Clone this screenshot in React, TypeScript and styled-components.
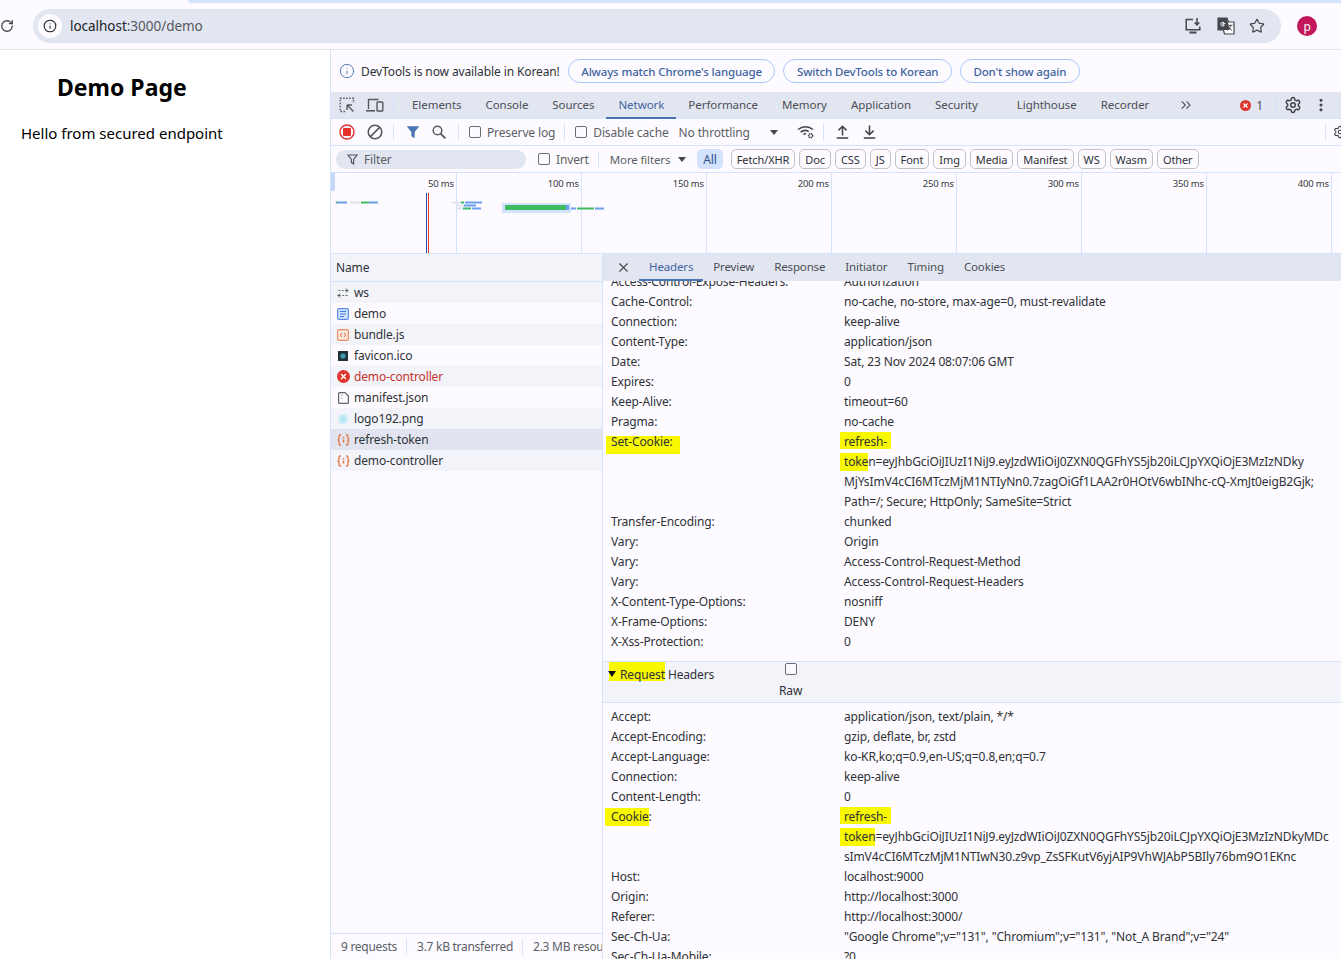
import styled, { createGlobalStyle } from 'styled-components';
import { ChevronsRight, Info, MoreVertical, RotateCw, Settings, Star, X } from 'lucide-react';

const colors = {
  bg: '#fdfbff',
  band: '#e2e6f1',
  line: '#d3e3fd',
  alt: '#f2f4fa',
  text: '#4c4f55',
  dark: '#2f3237',
  dim: '#5c5f66',
  blue: '#3f639f',
  mark: '#f8f800',
};

const GlobalStyle = createGlobalStyle`
  html, body {
    margin: 0;
    padding: 0;
    height: 100%;
    overflow: hidden;
    background: ${colors.bg};
  }
  #root {
    height: 100%;
  }
  * {
    box-sizing: border-box;
  }
`;

const mainTabs = ['Console', 'Sources', 'Network', 'Performance', 'Memory', 'Application', 'Security', 'Lighthouse', 'Recorder'];
const chips = ['Fetch/XHR', 'Doc', 'CSS', 'JS', 'Font', 'Img', 'Media', 'Manifest', 'WS', 'Wasm', 'Other'];
const ticks = [50, 100, 150, 200, 250, 300, 350, 400];
const detailTabs = ['Preview', 'Response', 'Initiator', 'Timing', 'Cookies'];

type IconKind = 'ws' | 'doc' | 'script' | 'favicon' | 'error' | 'manifest' | 'image' | 'fetch';
const requests: { name: string; icon: IconKind; failed?: boolean; selected?: boolean }[] = [
  { name: 'ws', icon: 'ws' },
  { name: 'demo', icon: 'doc' },
  { name: 'bundle.js', icon: 'script' },
  { name: 'favicon.ico', icon: 'favicon' },
  { name: 'demo-controller', icon: 'error', failed: true },
  { name: 'manifest.json', icon: 'manifest' },
  { name: 'logo192.png', icon: 'image' },
  { name: 'refresh-token', icon: 'fetch', selected: true },
  { name: 'demo-controller', icon: 'fetch' },
];

const responseTop = [
  ['Access-Control-Expose-Headers:', 'Authorization'],
  ['Cache-Control:', 'no-cache, no-store, max-age=0, must-revalidate'],
  ['Connection:', 'keep-alive'],
  ['Content-Type:', 'application/json'],
  ['Date:', 'Sat, 23 Nov 2024 08:07:06 GMT'],
  ['Expires:', '0'],
  ['Keep-Alive:', 'timeout=60'],
  ['Pragma:', 'no-cache'],
];

const responseBottom = [
  ['Transfer-Encoding:', 'chunked'],
  ['Vary:', 'Origin'],
  ['Vary:', 'Access-Control-Request-Method'],
  ['Vary:', 'Access-Control-Request-Headers'],
  ['X-Content-Type-Options:', 'nosniff'],
  ['X-Frame-Options:', 'DENY'],
  ['X-Xss-Protection:', '0'],
];

const requestTop = [
  ['Accept:', 'application/json, text/plain, */*'],
  ['Accept-Encoding:', 'gzip, deflate, br, zstd'],
  ['Accept-Language:', 'ko-KR,ko;q=0.9,en-US;q=0.8,en;q=0.7'],
  ['Connection:', 'keep-alive'],
  ['Content-Length:', '0'],
];

const requestBottom = [
  ['Host:', 'localhost:9000'],
  ['Origin:', 'http://localhost:3000'],
  ['Referer:', 'http://localhost:3000/'],
  ['Sec-Ch-Ua:', '"Google Chrome";v="131", "Chromium";v="131", "Not_A Brand";v="24"'],
  ['Sec-Ch-Ua-Mobile:', '?0'],
];

const InstallIcon = () => (
  <svg width="18" height="18" viewBox="0 0 18 18" fill="none" stroke="#45474c" strokeWidth="1.5">
    <path d="M9 2.5H2.2v10.3h13.6V9.5" />
    <path d="M5.5 15.5h7" strokeWidth="2" />
    <path d="M13 1v6.5M10.7 5.4 13 7.8l2.3-2.4" />
  </svg>
);

const TranslateIcon = () => (
  <svg width="18" height="18" viewBox="0 0 18 18">
    <path d="M1 1h9l1.5 4H17v12H7.5L6.5 13H1z" fill="#fdfbff" stroke="#45474c" strokeWidth="1.2" />
    <path d="M1 1h9l2.6 12H1z" fill="#45474c" />
    <path d="M8.4 6.6H5.9v1.3h1.3c-.2.8-.8 1.2-1.5 1.2a1.9 1.9 0 1 1 1.2-3.4" fill="none" stroke="#fdfbff" strokeWidth="1" />
    <path d="M11.5 8.3h4M13.5 8.3c-.2 2.4-1.2 4-3 5M12 10.4c.6 1.2 1.6 2.2 3 3" fill="none" stroke="#45474c" strokeWidth="1" />
  </svg>
);

const InspectIcon = () => (
  <svg width="16" height="16" viewBox="0 0 16 16" fill="none" stroke="#55585e" strokeWidth="1.4">
    <path d="M6 14.5H1.2V1.2h13.3V6" strokeDasharray="1.6 1.4" />
    <path d="M8 8h5M8 8v5M8 8l6.5 6.5" />
  </svg>
);

const DeviceIcon = () => (
  <svg width="18" height="15" viewBox="0 0 18 15" fill="none" stroke="#55585e" strokeWidth="1.4">
    <path d="M2.5 11V1.5h10" />
    <path d="M0 12.8h9" strokeWidth="1.6" />
    <rect x="11" y="4" width="5.8" height="9" rx="0.8" />
  </svg>
);

const RecordIcon = () => (
  <svg width="16" height="16" viewBox="0 0 16 16">
    <circle cx="8" cy="8" r="7" fill="none" stroke="#e5322d" strokeWidth="1.4" />
    <rect x="4" y="4" width="8" height="8" rx="1" fill="#e5322d" />
  </svg>
);

const ClearIcon = () => (
  <svg width="16" height="16" viewBox="0 0 16 16" fill="none" stroke="#55585e" strokeWidth="1.6">
    <circle cx="8" cy="8" r="6.8" />
    <path d="M3.4 12.6 12.6 3.4" />
  </svg>
);

const SearchIcon = () => (
  <svg width="14" height="14" viewBox="0 0 14 14" fill="none" stroke="#55585e" strokeWidth="1.5">
    <circle cx="5.5" cy="5.5" r="4.3" />
    <path d="M8.6 8.6 13.4 13.4" strokeWidth="1.9" />
  </svg>
);

const UploadIcon = () => (
  <svg width="13" height="14" viewBox="0 0 13 14" fill="none" stroke="#45474c" strokeWidth="1.6">
    <path d="M6.5 10.5V1.5M2.4 5.4 6.5 1.3l4.1 4.1" />
    <path d="M.8 13h11.4" />
  </svg>
);

const DownloadIcon = () => (
  <svg width="13" height="14" viewBox="0 0 13 14" fill="none" stroke="#45474c" strokeWidth="1.6">
    <path d="M6.5 .5v9M2.4 5.6l4.1 4.1 4.1-4.1" />
    <path d="M.8 13h11.4" />
  </svg>
);

const FunnelIcon = ({ size, color }: { size: number; color: string }) => (
  <svg width={size} height={size} viewBox="0 0 12 12">
    <path d="M.6 1h10.8L7.4 6v5.4L4.6 9.6V6z" fill={color} />
  </svg>
);

const OutlineFunnel = () => (
  <svg width="11" height="11" viewBox="0 0 11 11" fill="none" stroke="#54575d" strokeWidth="1.2">
    <path d="M1 1h9L6.6 5.4V10L4.4 8.6V5.4z" />
  </svg>
);

const WifiGearIcon = () => (
  <svg width="18" height="14" viewBox="0 0 18 14" fill="none" stroke="#45474c" strokeWidth="1.5">
    <path d="M1 4.5C5.5.8 11.5.8 16 4.5" />
    <path d="M3.6 7.2c2.5-2 5.8-2.2 8.2-.6" />
    <path d="M6.3 9.5c.9-.7 1.8-.9 2.8-.7" />
    <circle cx="13.6" cy="10.6" r="2" strokeWidth="1.6" strokeDasharray="1.2 .5" />
  </svg>
);

const ErrorBadge = ({ size }: { size: number }) => (
  <svg width={size} height={size} viewBox="0 0 12 12">
    <circle cx="6" cy="6" r="6" fill="#dc362e" />
    <path d="M3.8 3.8l4.4 4.4M8.2 3.8 3.8 8.2" stroke="#fff" strokeWidth="1.3" />
  </svg>
);

const RequestIcon = ({ kind }: { kind: IconKind }) => {
  switch (kind) {
    case 'ws':
      return (
        <svg width="12" height="12" viewBox="0 0 12 12" fill="none" stroke="#55585e" strokeWidth="1">
          <path d="M1.5 3.5h2M5 3.5h1.5M8 3.5h3M9 1.5l2 2-2 2" />
          <path d="M.8 8.5h3M5.5 8.5H7M8.5 8.5h2M3 6.5l-2 2 2 2" />
        </svg>
      );
    case 'doc':
      return (
        <svg width="12" height="12" viewBox="0 0 12 12">
          <rect x=".6" y=".6" width="10.8" height="10.8" rx="1.5" fill="#d3e3fd" stroke="#5a8eea" strokeWidth="1.2" />
          <path d="M3 3.5h6M3 6h6M3 8.5h4" stroke="#3b78e7" strokeWidth="1" />
        </svg>
      );
    case 'script':
      return (
        <svg width="12" height="12" viewBox="0 0 12 12">
          <rect x=".6" y=".6" width="10.8" height="10.8" rx="1.5" fill="#fbe9e0" stroke="#ea8c60" strokeWidth="1.2" />
          <path d="M5 4 3.4 6 5 8M7 4l1.6 2L7 8" fill="none" stroke="#e0662e" strokeWidth="1" />
        </svg>
      );
    case 'favicon':
      return (
        <svg width="10" height="10" viewBox="0 0 10 10">
          <rect width="10" height="10" fill="#23323a" />
          <circle cx="5" cy="5" r="2.6" fill="#3f9fb0" />
        </svg>
      );
    case 'error':
      return <ErrorBadge size={13} />;
    case 'manifest':
      return (
        <svg width="11" height="12" viewBox="0 0 11 12" fill="none" stroke="#5f6368" strokeWidth="1.2">
          <path d="M7 .6H1.6a1 1 0 0 0-1 1v8.8a1 1 0 0 0 1 1h7.8a1 1 0 0 0 1-1V4z" />
          <path d="M3.5 3.2h.8M3.5 6h.8" />
        </svg>
      );
    case 'image':
      return (
        <svg width="12" height="12" viewBox="0 0 12 12" fill="none" stroke="#a6e3f3" strokeWidth=".8">
          <ellipse cx="6" cy="6" rx="5" ry="2" />
          <ellipse cx="6" cy="6" rx="5" ry="2" transform="rotate(60 6 6)" />
          <ellipse cx="6" cy="6" rx="5" ry="2" transform="rotate(120 6 6)" />
          <circle cx="6" cy="6" r="1.1" fill="#a6e3f3" />
        </svg>
      );
    default:
      return (
        <svg width="13" height="12" viewBox="0 0 13 12" fill="none" stroke="#e57240" strokeWidth="1.3">
          <path d="M4 1H3C2 1 2 2 2 3v1.5C2 5.5 1 6 .6 6 1 6 2 6.5 2 7.5V9c0 1 0 2 1 2h1" />
          <path d="M9 1h1c1 0 1 1 1 2v1.5c0 1 1 1.5 1.4 1.5-.4 0-1.4.5-1.4 1.5V9c0 1 0 2-1 2H9" />
          <path d="M6.5 3v1.2M6.5 5.6v3" strokeWidth="1.5" />
        </svg>
      );
  }
};

const HeaderRows = ({ rows }: { rows: string[][] }) => (
  <>
    {rows.map(([key, value], index) => (
      <Row key={`${key}-${index}`}>
        <RowKey>{key}</RowKey>
        <RowValue>{value}</RowValue>
      </Row>
    ))}
  </>
);

export default function App() {
  return (
    <Page>
      <GlobalStyle />
      <BrowserBar>
        <TabEdge />
        <BrowserRow>
          <ReloadSlot>
            <RotateCw size={14} strokeWidth={2.2} color="#45474c" />
          </ReloadSlot>
          <Omnibox>
            <SiteInfo>
              <Info size={14} strokeWidth={1.8} color="#1f1f1f" />
            </SiteInfo>
            <UrlHost>localhost</UrlHost>
            <UrlPath>:3000/demo</UrlPath>
            <OmniboxActions>
              <InstallIcon />
              <TranslateIcon />
              <Star size={16} strokeWidth={1.8} color="#45474c" />
            </OmniboxActions>
          </Omnibox>
          <Avatar>p</Avatar>
        </BrowserRow>
      </BrowserBar>

      <Main>
        <DemoPane>
          <DemoTitle>Demo Page</DemoTitle>
          <DemoText>Hello from secured endpoint</DemoText>
        </DemoPane>

        <DevTools>
          <InfoBar>
            <Info size={16} strokeWidth={1.5} color="#5379b5" />
            <InfoText>DevTools is now available in Korean!</InfoText>
            <InfoButton>Always match Chrome's language</InfoButton>
            <InfoButton>Switch DevTools to Korean</InfoButton>
            <InfoButton>Don't show again</InfoButton>
          </InfoBar>

          <TabBar>
            <ToolIcon $width={28}>
              <InspectIcon />
            </ToolIcon>
            <ToolIcon $width={28}>
              <DeviceIcon />
            </ToolIcon>
            <VLine $margin="0 6px 0 4px" />
            <MainTab>Elements</MainTab>
            {mainTabs.map((tab) => (
              <MainTab key={tab} $active={tab === 'Network'} $extra={tab === 'Security' ? 15 : 0}>
                {tab}
              </MainTab>
            ))}
            <MoreTabs>
              <ChevronsRight size={16} strokeWidth={1.7} color="#55585e" />
            </MoreTabs>
            <TabBarRight>
              <ErrorBadge size={11} />
              <ErrorCount>1</ErrorCount>
              <VLine $margin="0 4px 0 8px" />
              <Settings size={18} strokeWidth={2} color="#3f4349" />
              <MenuSlot>
                <MoreVertical size={16} strokeWidth={2.6} color="#3f4349" />
              </MenuSlot>
            </TabBarRight>
          </TabBar>

          <ToolBar>
            <ToolIcon $width={28}>
              <RecordIcon />
            </ToolIcon>
            <ToolIcon $width={28}>
              <ClearIcon />
            </ToolIcon>
            <VLine $margin="0 12px 0 4px" />
            <FunnelIcon size={14} color="#4a74b4" />
            <ToolIcon $width={38}>
              <SearchIcon />
            </ToolIcon>
            <VLine $margin="0 10px 0 0" />
            <CheckLabel>
              <Check type="checkbox" readOnly />
              Preserve log
            </CheckLabel>
            <VLine $margin="0 10px 0 9px" />
            <CheckLabel>
              <Check type="checkbox" readOnly />
              Disable cache
            </CheckLabel>
            <Throttle>No throttling</Throttle>
            <Caret $gap={20} />
            <WifiSlot>
              <WifiGearIcon />
            </WifiSlot>
            <VLine $margin="0 10px 0 8px" />
            <ToolIcon $width={18}>
              <UploadIcon />
            </ToolIcon>
            <ToolIcon $width={36}>
              <DownloadIcon />
            </ToolIcon>
            <ToolBarEnd>
              <VLine $margin="0 7px 0 0" />
              <Settings size={14} strokeWidth={1.8} color="#3f4349" />
            </ToolBarEnd>
          </ToolBar>

          <FilterBar>
            <FilterInput>
              <OutlineFunnel />
              Filter
            </FilterInput>
            <CheckLabel>
              <Check type="checkbox" readOnly />
              Invert
            </CheckLabel>
            <VLine $margin="0 11px 0 9px" />
            <MoreFilters>More filters</MoreFilters>
            <Caret $gap={8} />
            <AllChip>All</AllChip>
            <ChipList>
              {chips.map((chip) => (
                <Chip key={chip}>{chip}</Chip>
              ))}
            </ChipList>
          </FilterBar>

          <Overview>
            {ticks.map((tick) => (
              <OverviewColumn key={tick}>{tick} ms</OverviewColumn>
            ))}
            <OverviewHandle />
            <OverviewBars width="300" height="80" viewBox="0 0 300 80">
              <g transform="translate(-331 -173)">
                <path d="M335 202.5h2" stroke="#dfe3ea" strokeWidth="2" />
                <path d="M336 202.5h1" stroke="#3fba62" strokeWidth="2" />
                <path d="M337 202.5h10M369 202.5h9" stroke="#6b9ff0" strokeWidth="2" />
                <path d="M350 202.5h10" stroke="#e0e3ea" strokeWidth="2" />
                <path d="M361 202.5h8" stroke="#3fba62" strokeWidth="2" />
                <path d="M452 202.5h9M456 205.5h8M457 208.5h6" stroke="#e0e3ea" strokeWidth="2" />
                <path d="M461 202.5h3M463 208.5h8" stroke="#3fba62" strokeWidth="2" />
                <path d="M465 202.5h17M464 205.5h12M472 208.5h9" stroke="#6b9ff0" strokeWidth="2" />
                <rect x="502" y="203" width="69" height="10" fill="#d3e3fd" />
                <rect x="505" y="205" width="61" height="5" fill="#3fba62" />
                <rect x="566" y="205" width="3" height="5" fill="#6b9ff0" />
                <path d="M571 208.5h5M595 208.5h9" stroke="#6b9ff0" strokeWidth="2" />
                <path d="M577 208.5h17" stroke="#3fba62" strokeWidth="2" />
                <path d="M426.5 193v60" stroke="#1f4fa8" strokeWidth="1" />
                <path d="M428.5 193v60" stroke="#e5322d" strokeWidth="1" />
              </g>
            </OverviewBars>
          </Overview>

          <Split>
            <RequestPane>
              <NameHeader>Name</NameHeader>
              <RequestList>
                {requests.map((request, index) => (
                  <RequestRow key={`${request.name}-${index}`} $odd={index % 2 === 0} $selected={request.selected}>
                    <RequestIconSlot>
                      <RequestIcon kind={request.icon} />
                    </RequestIconSlot>
                    <RequestName $failed={request.failed}>{request.name}</RequestName>
                  </RequestRow>
                ))}
              </RequestList>
              <StatusBar>
                <StatusItem>9 requests</StatusItem>
                <StatusItem>3.7 kB transferred</StatusItem>
                <StatusItem>2.3 MB resources</StatusItem>
              </StatusBar>
            </RequestPane>

            <DetailPane>
              <DetailTabs>
                <CloseSlot>
                  <X size={15} strokeWidth={1.8} color="#45474c" />
                </CloseSlot>
                <DetailTab $active>Headers</DetailTab>
                {detailTabs.map((tab) => (
                  <DetailTab key={tab}>{tab}</DetailTab>
                ))}
              </DetailTabs>
              <DetailBody>
                <DetailScroll>
                  <HeaderRows rows={responseTop} />
                  <Row>
                    <RowKey>
                      <SetCookieMark>Set-Cookie:</SetCookieMark>
                    </RowKey>
                    <RowValue>
                      <ValueLine>
                        <RefreshMark>refresh-</RefreshMark>
                      </ValueLine>
                      <ValueLine>
                        <TokenMark>toke</TokenMark>
                        n=eyJhbGciOiJIUzI1NiJ9.eyJzdWIiOiJ0ZXN0QGFhYS5jb20iLCJpYXQiOjE3MzIzNDky
                      </ValueLine>
                      <ValueLine>MjYsImV4cCI6MTczMjM1NTIyNn0.7zagOiGf1LAA2r0HOtV6wbINhc-cQ-XmJt0eigB2Gjk;</ValueLine>
                      <ValueLine>Path=/; Secure; HttpOnly; SameSite=Strict</ValueLine>
                    </RowValue>
                  </Row>
                  <HeaderRows rows={responseBottom} />
                  <SectionHeader>
                    <SectionTitle>
                      <SectionArrow />
                      <RequestMark>Request</RequestMark> Headers
                    </SectionTitle>
                    <RawToggle>
                      <Check type="checkbox" readOnly />
                      Raw
                    </RawToggle>
                  </SectionHeader>
                  <HeaderRows rows={requestTop} />
                  <Row>
                    <RowKey>
                      <CookieMark>Cookie</CookieMark>:
                    </RowKey>
                    <RowValue>
                      <ValueLine>
                        <RefreshMark>refresh-</RefreshMark>
                      </ValueLine>
                      <ValueLine>
                        <TokenMark>token</TokenMark>
                        =eyJhbGciOiJIUzI1NiJ9.eyJzdWIiOiJ0ZXN0QGFhYS5jb20iLCJpYXQiOjE3MzIzNDkyMDc
                      </ValueLine>
                      <ValueLine>sImV4cCI6MTczMjM1NTIwN30.z9vp_ZsSFKutV6yjAIP9VhWJAbP5BIly76bm9O1EKnc</ValueLine>
                    </RowValue>
                  </Row>
                  <HeaderRows rows={requestBottom} />
                </DetailScroll>
              </DetailBody>
            </DetailPane>
          </Split>
        </DevTools>
      </Main>
    </Page>
  );
}

const sans = `'Noto Sans', 'Noto Sans CJK KR', sans-serif`;

const Page = styled.div`
  height: 100vh;
  display: flex;
  flex-direction: column;
  overflow: hidden;
  font-family: ${sans};
  font-size: 12px;
  letter-spacing: -0.14px;
  color: ${colors.text};
`;

const BrowserBar = styled.div`
  height: 50px;
  flex: none;
  border-bottom: 1px solid #e2e4ee;
  background: ${colors.bg};
`;

const TabEdge = styled.div`
  height: 3px;
  margin-left: 188px;
  border-bottom-left-radius: 6px;
  background: ${colors.line};
`;

const BrowserRow = styled.div`
  display: flex;
  align-items: center;
  height: 34px;
  margin-top: 6px;
`;

const ReloadSlot = styled.div`
  width: 33px;
  flex: none;
  display: flex;
`;

const Omnibox = styled.div`
  width: 1248px;
  height: 34px;
  flex: none;
  display: flex;
  align-items: center;
  padding: 0 0 1px 5px;
  border-radius: 17px;
  background: ${colors.band};
  font-size: 13.5px;
  letter-spacing: -0.03px;
`;

const SiteInfo = styled.div`
  width: 24px;
  height: 24px;
  margin: 1px 8px 0 0;
  display: flex;
  align-items: center;
  justify-content: center;
  border-radius: 50%;
  background: ${colors.bg};
`;

const UrlHost = styled.span`
  color: #202124;
`;

const UrlPath = styled.span`
  color: #54575d;
`;

const OmniboxActions = styled.div`
  margin-left: auto;
  margin-right: 16px;
  display: flex;
  align-items: center;
  gap: 14.5px;
`;

const Avatar = styled.div`
  width: 20px;
  height: 20px;
  margin-left: 16px;
  display: flex;
  align-items: center;
  justify-content: center;
  border-radius: 50%;
  background: #c2185b;
  color: #fff;
  font-size: 12px;
`;

const Main = styled.div`
  flex: 1;
  min-height: 0;
  display: flex;
`;

const DemoPane = styled.div`
  width: 331px;
  flex: none;
  border-right: 1px solid ${colors.line};
  background: #fff;
  color: #000;
`;

const DemoTitle = styled.h1`
  margin: 21px 0 0 57px;
  font-size: 23px;
  line-height: 32px;
  font-weight: 700;
  letter-spacing: 0;
`;

const DemoText = styled.p`
  margin: 19px 0 0 21px;
  font-size: 15px;
  line-height: 22px;
  letter-spacing: 0;
`;

const DevTools = styled.div`
  flex: 1;
  min-width: 0;
  display: flex;
  flex-direction: column;
  background: ${colors.bg};
`;

const InfoBar = styled.div`
  height: 42px;
  flex: none;
  display: flex;
  align-items: center;
  gap: 8px;
  padding-left: 8px;
`;

const InfoText = styled.span`
  margin-left: -2px;
  letter-spacing: -0.11px;
  color: ${colors.dark};
`;

const InfoButton = styled.div`
  height: 24px;
  display: flex;
  align-items: center;
  padding: 0 12.5px;
  border: 1px solid #a8c7fa;
  border-radius: 12px;
  color: ${colors.blue};
  font-size: 11.5px;
  font-weight: 500;
`;

const TabBar = styled.div`
  height: 27px;
  flex: none;
  display: flex;
  align-items: stretch;
  padding-left: 2px;
  border-bottom: 1px solid ${colors.line};
  background: ${colors.band};
`;

const ToolIcon = styled.div<{ $width: number }>`
  width: ${(props) => props.$width}px;
  flex: none;
  display: flex;
  align-items: center;
  justify-content: center;
`;

const VLine = styled.div<{ $margin: string }>`
  width: 1px;
  height: 16px;
  flex: none;
  align-self: center;
  margin: ${(props) => props.$margin};
  background: ${colors.line};
`;

const MainTab = styled.div<{ $active?: boolean; $extra?: number }>`
  display: flex;
  align-items: center;
  padding: 0 12px;
  margin-right: ${(props) => props.$extra ?? 0}px;
  margin-bottom: -1px;
  font-size: 11.5px;
  letter-spacing: -0.05px;
  color: ${(props) => (props.$active ? colors.blue : colors.text)};
  border-bottom: 2px solid ${(props) => (props.$active ? '#4a74b4' : 'transparent')};
`;

const MoreTabs = styled.div`
  display: flex;
  align-items: center;
  margin-left: 17px;
`;

const TabBarRight = styled.div`
  margin-left: auto;
  padding-right: 12px;
  display: flex;
  align-items: center;
  gap: 4px;
`;

const ErrorCount = styled.span`
  margin-left: 1px;
`;

const MenuSlot = styled.div`
  margin-left: 7px;
  display: flex;
`;

const ToolBar = styled.div`
  height: 27px;
  flex: none;
  display: flex;
  align-items: center;
  padding-left: 2px;
  border-bottom: 1px solid ${colors.line};
`;

const ToolBarEnd = styled.div`
  margin-left: auto;
  margin-right: -6px;
  display: flex;
  align-items: center;
`;

const CheckLabel = styled.label`
  display: flex;
  align-items: center;
  gap: 6px;
  color: ${colors.dim};
`;

const Check = styled.input`
  appearance: none;
  width: 12px;
  height: 12px;
  margin: 0;
  border: 1px solid #6a6d73;
  border-radius: 2px;
  background: ${colors.bg};
`;

const Throttle = styled.span`
  margin-left: 10px;
  color: ${colors.dim};
`;

const Caret = styled.span<{ $gap: number }>`
  width: 0;
  height: 0;
  margin-left: ${(props) => props.$gap}px;
  border-left: 4px solid transparent;
  border-right: 4px solid transparent;
  border-top: 5px solid #45474c;
`;

const WifiSlot = styled.div`
  margin-left: 19px;
  display: flex;
`;

const FilterBar = styled.div`
  height: 27px;
  flex: none;
  display: flex;
  align-items: center;
  padding-left: 5px;
  border-bottom: 1px solid ${colors.line};
`;

const FilterInput = styled.div`
  width: 190px;
  height: 19px;
  margin-right: 12px;
  display: flex;
  align-items: center;
  gap: 6px;
  padding-left: 11px;
  border-radius: 10px;
  background: ${colors.band};
  color: ${colors.dim};
`;

const MoreFilters = styled.span`
  font-size: 11.5px;
  color: ${colors.dim};
`;

const AllChip = styled.div`
  height: 20px;
  margin-left: 11px;
  display: flex;
  align-items: center;
  padding: 0 6px;
  border-radius: 5px;
  background: ${colors.line};
  color: #2c4f8a;
`;

const ChipList = styled.div`
  margin-left: 8px;
  display: flex;
  gap: 4px;
`;

const Chip = styled.div`
  height: 20px;
  display: flex;
  align-items: center;
  padding: 0 5px;
  border: 1px solid #c1c3c9;
  border-radius: 5px;
  font-size: 11px;
  letter-spacing: -0.1px;
  color: ${colors.dark};
`;

const Overview = styled.div`
  position: relative;
  height: 81px;
  flex: none;
  display: flex;
  padding-left: 1px;
  border-bottom: 1px solid ${colors.line};
`;

const OverviewColumn = styled.div`
  width: 125px;
  flex: none;
  padding: 4px 2px 0 0;
  border-right: 1px solid ${colors.line};
  text-align: right;
  font-size: 9.5px;
  line-height: 14px;
  color: #35383d;
`;

const OverviewHandle = styled.div`
  position: absolute;
  left: 0;
  top: 0;
  width: 4px;
  height: 18px;
  border-bottom-right-radius: 2px;
  background: #c4d7f8;
`;

const OverviewBars = styled.svg`
  position: absolute;
  left: 0;
  top: 0;
`;

const Split = styled.div`
  flex: 1;
  min-height: 0;
  display: flex;
`;

const RequestPane = styled.div`
  width: 272px;
  flex: none;
  display: flex;
  flex-direction: column;
  border-right: 1px solid ${colors.line};
`;

const NameHeader = styled.div`
  height: 28px;
  flex: none;
  display: flex;
  align-items: center;
  padding-left: 5px;
  border-bottom: 1px solid ${colors.line};
  background: ${colors.alt};
  color: ${colors.dark};
`;

const RequestList = styled.div`
  flex: 1;
  min-height: 0;
`;

const RequestRow = styled.div<{ $odd: boolean; $selected?: boolean }>`
  height: 21px;
  display: flex;
  align-items: center;
  background: ${(props) => (props.$selected ? '#e1e4ee' : props.$odd ? colors.alt : colors.bg)};
`;

const RequestIconSlot = styled.div`
  width: 23px;
  flex: none;
  display: flex;
  justify-content: center;
  padding-left: 1px;
`;

const RequestName = styled.span<{ $failed?: boolean }>`
  color: ${(props) => (props.$failed ? '#c5332c' : colors.dark)};
`;

const StatusBar = styled.div`
  height: 26px;
  flex: none;
  display: flex;
  align-items: center;
  padding-top: 1px;
  overflow: hidden;
  white-space: nowrap;
  letter-spacing: -0.28px;
  border-top: 1px solid ${colors.line};
  color: ${colors.dim};
`;

const StatusItem = styled.span`
  padding: 0 9px 0 10px;
  border-right: 1px solid ${colors.line};
  line-height: 16px;
`;

const DetailPane = styled.div`
  flex: 1;
  min-width: 0;
  display: flex;
  flex-direction: column;
`;

const DetailTabs = styled.div`
  height: 27px;
  flex: none;
  display: flex;
  align-items: stretch;
  padding-left: 13px;
  background: ${colors.band};
`;

const CloseSlot = styled.div`
  width: 23px;
  flex: none;
  display: flex;
  align-items: center;
`;

const DetailTab = styled.div<{ $active?: boolean }>`
  display: flex;
  align-items: center;
  padding: 0 10px;
  font-size: 11.5px;
  color: ${(props) => (props.$active ? colors.blue : colors.text)};
  border-bottom: 2px solid ${(props) => (props.$active ? '#4a74b4' : 'transparent')};
`;

const DetailBody = styled.div`
  flex: 1;
  min-height: 0;
  overflow: hidden;
`;

const DetailScroll = styled.div`
  margin-top: -9px;
`;

const Row = styled.div`
  display: flex;
  min-height: 20px;
  padding-left: 8px;
  line-height: 20px;
  color: ${colors.dark};
`;

const RowKey = styled.div`
  width: 233px;
  flex: none;
`;

const RowValue = styled.div`
  flex: 1;
  min-width: 0;
  white-space: nowrap;
`;

const ValueLine = styled.div`
  height: 20px;
`;

const Mark = styled.span`
  display: inline-block;
  background: ${colors.mark};
`;

const SetCookieMark = styled(Mark)`
  margin: 0 -7px -2px -5px;
  padding: 0 7px 2px 5px;
  background: linear-gradient(transparent 4px, ${colors.mark} 4px);
`;

const RefreshMark = styled(Mark)`
  margin: 0 -4px;
  padding: 0 4px;
  background: linear-gradient(${colors.mark} 17px, transparent 17px);
`;

const TokenMark = styled(Mark)`
  margin-left: -4px;
  padding-left: 4px;
  line-height: 18px;
`;

const CookieMark = styled(Mark)`
  margin-left: -6px;
  padding-left: 6px;
  line-height: 18px;
`;

const RequestMark = styled(Mark)`
  margin-left: -11px;
  padding: 7px 0 0 11px;
  line-height: 12px;
`;

const SectionHeader = styled.div`
  height: 42px;
  margin: 9px 0 4px;
  display: flex;
  padding-left: 5px;
  border-top: 1px solid ${colors.line};
  border-bottom: 1px solid ${colors.line};
  background: ${colors.alt};
`;

const SectionTitle = styled.div`
  width: 171px;
  white-space: pre;
  color: ${colors.dark};
`;

const SectionArrow = styled.span`
  position: relative;
  z-index: 1;
  display: inline-block;
  width: 0;
  height: 0;
  margin-right: 4px;
  vertical-align: 2px;
  border-left: 4px solid transparent;
  border-right: 4px solid transparent;
  border-top: 6px solid #111;
`;

const RawToggle = styled.label`
  display: flex;
  flex-direction: column;
  align-items: center;
  gap: 7px;
  padding-top: 1px;
  color: ${colors.dark};
`;
